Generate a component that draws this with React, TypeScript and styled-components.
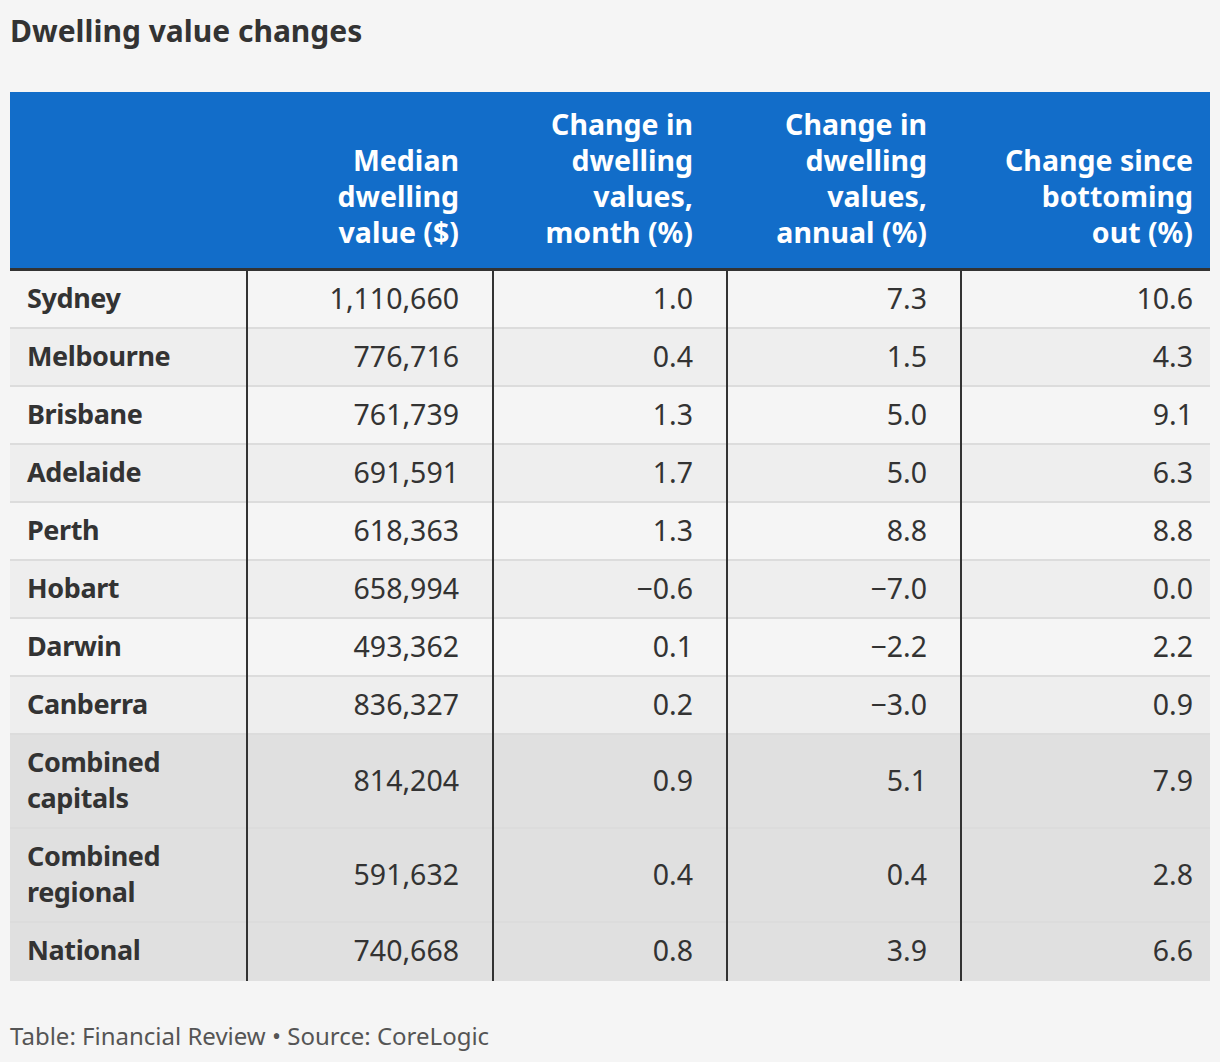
import React from "react";
import styled, { createGlobalStyle } from "styled-components";

const Global = createGlobalStyle`
  html, body { margin: 0; padding: 0; background: #f5f5f5; }
  body { font-family: "Noto Sans", "Open Sans", sans-serif; color: #333; }
`;

const Page = styled.div`
  padding: 0 10px;
  width: 1200px;
`;

const Title = styled.h1`
  margin: 0;
  padding-top: 11px;
  height: 92px;
  box-sizing: border-box;
  font-size: 30px;
  line-height: 40px;
  font-weight: 700;
  color: #333;
`;

const COLS = "236px 246px 234px 234px 250px";

const HeaderRow = styled.div`
  display: grid;
  grid-template-columns: ${COLS};
  background: #126dc9;
  border-bottom: 3px solid #333;
  height: 179px;
  box-sizing: border-box;
`;

const HeadCell = styled.div<{ $last?: boolean }>`
  display: flex;
  align-items: flex-end;
  justify-content: flex-end;
  text-align: right;
  padding: 14px ${(p) => (p.$last ? 17 : 33)}px 18px 17px;
  font-size: 28.5px;
  line-height: 36px;
  font-weight: 700;
  color: #fff;
`;

const Row = styled.div<{ $tone: "light" | "mid" | "dark" }>`
  display: grid;
  grid-template-columns: ${COLS};
  background: ${(p) =>
    p.$tone === "light" ? "#f5f5f5" : p.$tone === "mid" ? "#eeeeee" : "#e0e0e0"};
`;

const Cell = styled.div<{ $first?: boolean; $last?: boolean; $end?: boolean }>`
  display: flex;
  align-items: center;
  justify-content: ${(p) => (p.$first ? "flex-start" : "flex-end")};
  text-align: ${(p) => (p.$first ? "left" : "right")};
  padding: 9px ${(p) => (p.$last ? 17 : 33)}px 13px 17px;
  border-left: ${(p) => (p.$first ? "none" : "2px solid #333")};
  box-shadow: ${(p) => (p.$end ? "none" : "inset 0 -2px 0 #dcdcdc")};
  font-size: ${(p) => (p.$first ? "27px" : "28.5px")};
  letter-spacing: ${(p) => (p.$first ? "-0.4px" : "0")};
  line-height: 36px;
  font-weight: ${(p) => (p.$first ? 700 : 400)};
  color: #333;
`;

const Footer = styled.div`
  padding-top: 39px;
  font-size: 24px;
  line-height: 32px;
  color: #555;
`;

const headers = [
  "",
  "Median dwelling value ($)",
  "Change in dwelling values, month (%)",
  "Change in dwelling values, annual (%)",
  "Change since bottoming out (%)",
];

const headerLines: string[][] = [
  [],
  ["Median", "dwelling", "value ($)"],
  ["Change in", "dwelling", "values,", "month (%)"],
  ["Change in", "dwelling", "values,", "annual (%)"],
  ["Change since", "bottoming", "out (%)"],
];

type R = { name: string[]; vals: string[]; tone: "light" | "mid" | "dark" };

const rows: R[] = [
  { name: ["Sydney"], vals: ["1,110,660", "1.0", "7.3", "10.6"], tone: "light" },
  { name: ["Melbourne"], vals: ["776,716", "0.4", "1.5", "4.3"], tone: "mid" },
  { name: ["Brisbane"], vals: ["761,739", "1.3", "5.0", "9.1"], tone: "light" },
  { name: ["Adelaide"], vals: ["691,591", "1.7", "5.0", "6.3"], tone: "mid" },
  { name: ["Perth"], vals: ["618,363", "1.3", "8.8", "8.8"], tone: "light" },
  { name: ["Hobart"], vals: ["658,994", "\u22120.6", "\u22127.0", "0.0"], tone: "mid" },
  { name: ["Darwin"], vals: ["493,362", "0.1", "\u22122.2", "2.2"], tone: "light" },
  { name: ["Canberra"], vals: ["836,327", "0.2", "\u22123.0", "0.9"], tone: "mid" },
  { name: ["Combined", "capitals"], vals: ["814,204", "0.9", "5.1", "7.9"], tone: "dark" },
  { name: ["Combined", "regional"], vals: ["591,632", "0.4", "0.4", "2.8"], tone: "dark" },
  { name: ["National"], vals: ["740,668", "0.8", "3.9", "6.6"], tone: "dark" },
];

export default function App() {
  return (
    <Page>
      <Global />
      <Title>Dwelling value changes</Title>
      <div role="table">
        <HeaderRow role="row">
          {headerLines.map((lines, i) => (
            <HeadCell key={i} $last={i === 4} aria-label={headers[i]}>
              <span>
                {lines.map((l, j) => (
                  <React.Fragment key={j}>
                    {j > 0 && <br />}
                    {l}
                  </React.Fragment>
                ))}
              </span>
            </HeadCell>
          ))}
        </HeaderRow>
        {rows.map((r, ri) => {
          const end = ri === rows.length - 1;
          return (
            <Row key={ri} $tone={r.tone} role="row">
              <Cell $first $end={end}>
                <span>
                  {r.name.map((n, j) => (
                    <React.Fragment key={j}>
                      {j > 0 && <br />}
                      {n}
                    </React.Fragment>
                  ))}
                </span>
              </Cell>
              {r.vals.map((v, vi) => (
                <Cell key={vi} $last={vi === 3} $end={end}>
                  {v}
                </Cell>
              ))}
            </Row>
          );
        })}
      </div>
      <Footer>Table: Financial Review • Source: CoreLogic</Footer>
    </Page>
  );
}
